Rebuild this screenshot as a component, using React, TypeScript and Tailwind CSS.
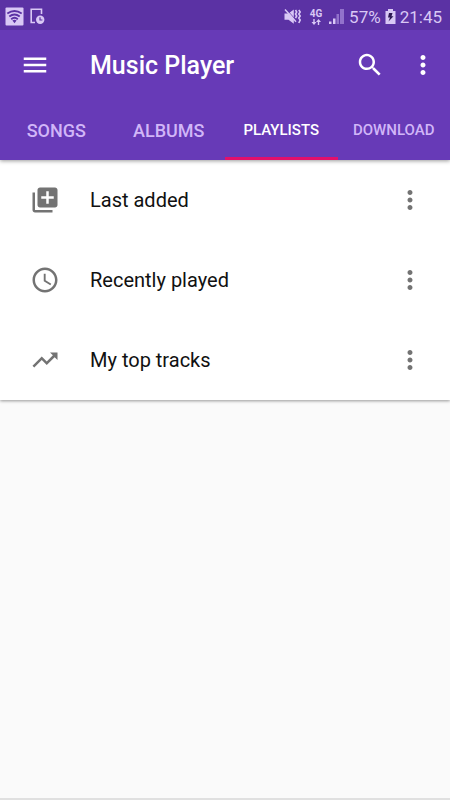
import React from "react";

const MENU = "M3 18h18v-2H3v2zm0-5h18v-2H3v2zm0-7v2h18V6H3z";
const SEARCH =
  "M15.5 14h-.79l-.28-.27C15.41 12.59 16 11.11 16 9.5 16 5.91 13.09 3 9.5 3S3 5.91 3 9.5 5.91 16 9.5 16c1.61 0 3.09-.59 4.23-1.57l.27.28v.79l5 4.99L20.49 19l-4.99-5zm-6 0C7.01 14 5 11.99 5 9.5S7.01 5 9.5 5 14 7.01 14 9.5 11.99 14 9.5 14z";
const MORE =
  "M12 8c1.1 0 2-.9 2-2s-.9-2-2-2-2 .9-2 2 .9 2 2 2zm0 2c-1.1 0-2 .9-2 2s.9 2 2 2 2-.9 2-2-.9-2-2-2zm0 6c-1.1 0-2 .9-2 2s.9 2 2 2 2-.9 2-2-.9-2-2-2z";
const LIBRARY_ADD =
  "M4 6H2v14c0 1.1.9 2 2 2h14v-2H4V6zm16-4H8c-1.1 0-2 .9-2 2v12c0 1.1.9 2 2 2h12c1.1 0 2-.9 2-2V4c0-1.1-.9-2-2-2zm-1 9h-4v4h-2v-4H9V9h4V5h2v4h4v2z";
const CLOCK =
  "M11.99 2C6.47 2 2 6.48 2 12s4.47 10 9.99 10C17.52 22 22 17.52 22 12S17.52 2 11.99 2zM12 20c-4.42 0-8-3.58-8-8s3.58-8 8-8 8 3.58 8 8-3.58 8-8 8zm.5-13H11v6l5.25 3.15.75-1.23-4.5-2.67z";
const TRENDING =
  "M16 6l2.29 2.29-4.88 4.88-4-4L2 16.59 3.41 18l6-6 4 4 6.3-6.29L22 12V6z";

function Icon({ d }: { d: string }) {
  return (
    <svg viewBox="0 0 24 24" className="size-[30px] shrink-0 fill-current" aria-hidden="true">
      <path d={d} />
    </svg>
  );
}

function StatusBar() {
  return (
    <div className="flex h-[30px] items-center justify-between bg-[#5b32a4] pt-[3px] pr-2 pl-[5px] text-[#d9c8f5]">
      <div className="flex items-center gap-[6px]">
        <svg viewBox="0 0 19 19" className="size-[19px]" aria-label="Wi-Fi">
          <rect x="0.5" y="0.5" width="18" height="18" rx="1" fill="currentColor" />
          <g fill="none" stroke="#5b32a4" strokeWidth="1.9">
            <path d="M2.3 6.6Q9.5 1.4 16.7 6.6" />
            <path d="M4.3 9.6Q9.5 5.4 14.7 9.6" />
            <path d="M6.2 12.2Q9.5 9.4 12.8 12.2" />
          </g>
          <path d="M7.4 13.6Q9.5 12 11.6 13.6L9.5 16.2z" fill="#5b32a4" />
        </svg>
        <svg viewBox="0 0 15 17" className="h-[17px] w-[15px]" aria-label="Scheduled task">
          <path d="M5 14.5H1.2V1.2H11.5V6" fill="none" stroke="currentColor" strokeWidth="1.6" />
          <circle cx="10.2" cy="11.8" r="4.2" fill="currentColor" />
          <path d="M10 9.3V12H12.4" fill="none" stroke="#5b32a4" strokeWidth="1.2" />
        </svg>
      </div>
      <div className="flex items-center gap-1">
        <svg viewBox="0 0 17 17" className="mr-1 size-[17px]" aria-label="Vibrate">
          <path d="M0.5 5.5H4.5L9.8 1.5V15.8L4.5 11.8H0.5z" fill="currentColor" />
          <path d="M2 1L12.8 13" stroke="#5b32a4" strokeWidth="0.9" />
          <path d="M1 1.5L12 13.8" stroke="currentColor" strokeWidth="1.5" />
          <path
            d="M11.5 2L12.7 4L11.5 6L12.7 8L11.5 10M14.8 2L16.2 4L14.8 6L16.2 8L14.8 10L16.2 12L14.8 15"
            fill="none"
            stroke="currentColor"
            strokeWidth="1.6"
          />
        </svg>
        <div className="mr-[2px] flex w-[14px] flex-col items-center">
          <span className="text-[10px] leading-[10px] font-bold">4G</span>
          <svg viewBox="0 0 10 6" className="h-[6px] w-[10px]" aria-hidden="true">
            <path d="M3 6L0.5 3H2.3V0H3.7V3H5.5zM7.5 0L10 3H8.2V6H6.8V3H5z" fill="currentColor" />
          </svg>
        </div>
        <svg viewBox="0 0 15 15" className="mr-px h-[15px] w-[15px]" aria-label="Signal">
          <path d="M0 12.5H2.5V15H0zM4 9.5H6.5V15H4z" fill="currentColor" />
          <path d="M7.5 5H10V15H7.5zM11 0H15V15H11z" fill="#9272cb" />
        </svg>
        <span className="text-[17px] leading-5">57%</span>
        <svg viewBox="0 0 11 15" className="h-[15px] w-[11px]" aria-label="Battery charging">
          <path d="M3 0H8V2H10.5V15H0.5V2H3z" fill="currentColor" />
          <path d="M7.5 4H4L3 8.5H5L3.5 12.5L8.5 7.2H6.5z" fill="#2c1753" />
        </svg>
        <span className="text-[17px] leading-5">21:45</span>
      </div>
    </div>
  );
}

const tabs = [
  { label: "Songs", size: "text-[18px]", active: false },
  { label: "Albums", size: "text-[18px]", active: false },
  { label: "Playlists", size: "text-[15px]", active: true },
  { label: "Download", size: "text-[15px]", active: false },
];

const playlists = [
  { name: "Last added", icon: LIBRARY_ADD },
  { name: "Recently played", icon: CLOCK },
  { name: "My top tracks", icon: TRENDING },
];

export default function App() {
  return (
    <div className="flex min-h-screen flex-col border-b-2 border-[#e0e0e0] bg-[#fafafa] font-['Roboto',sans-serif]">
      <header className="relative bg-[#673ab7] shadow-[0_1px_4px_rgba(0,0,0,0.4)]">
        <StatusBar />
        <div className="flex h-[70px] items-center pr-3 pl-5 text-white">
          <button type="button" aria-label="Menu" className="flex">
            <Icon d={MENU} />
          </button>
          <h1 className="ml-10 flex-1 pt-[2px] text-[25px] leading-8 font-medium">Music Player</h1>
          <button type="button" aria-label="Search" className="flex">
            <Icon d={SEARCH} />
          </button>
          <button type="button" aria-label="More options" className="ml-[23px] flex">
            <Icon d={MORE} />
          </button>
        </div>
        <nav className="grid h-[60px] grid-cols-4" role="tablist">
          {tabs.map((tab) => (
            <button
              key={tab.label}
              type="button"
              role="tab"
              aria-selected={tab.active}
              className={`border-b-3 pt-1 font-medium uppercase ${tab.size} ${
                tab.active ? "border-[#e3106b] text-white" : "border-transparent text-[#d1b6f8]"
              }`}
            >
              {tab.label}
            </button>
          ))}
        </nav>
      </header>
      <main>
        <ul className="bg-white shadow-[0_1px_3px_rgba(0,0,0,0.4)]">
          {playlists.map((item) => (
            <li key={item.name} className="flex h-20 items-center pr-[25px] pl-[30px] text-[#737373]">
              <Icon d={item.icon} />
              <span className="ml-[30px] flex-1 text-xl text-[#111111]">{item.name}</span>
              <button type="button" aria-label={`Options for ${item.name}`} className="flex">
                <Icon d={MORE} />
              </button>
            </li>
          ))}
        </ul>
      </main>
    </div>
  );
}
